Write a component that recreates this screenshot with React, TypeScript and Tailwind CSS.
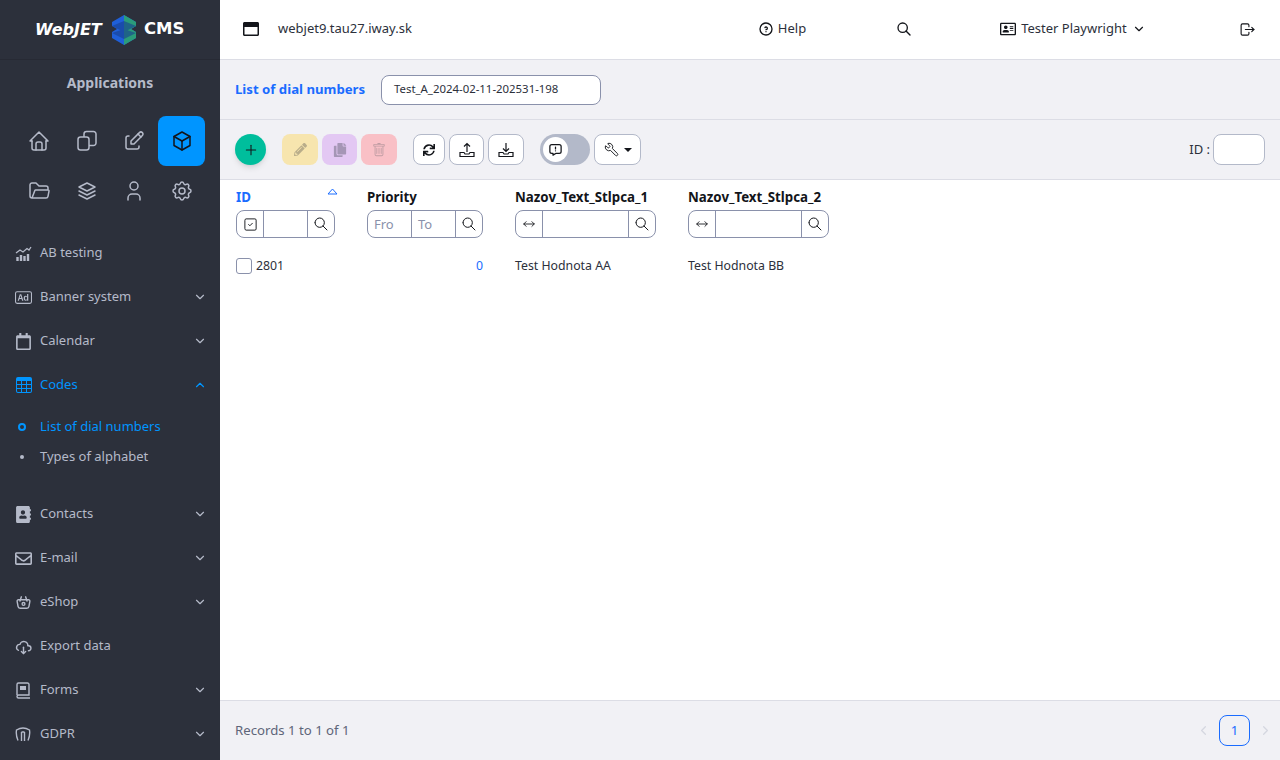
import type { ReactNode } from 'react';
import { Wrench } from 'lucide-react';
import {
  TbHome, TbEdit, TbBox, TbFolderOpen, TbStack2, TbUser, TbSettings,
  TbChevronDown, TbChevronUp, TbHelpCircle, TbSearch, TbLogout, TbPlus,
  TbMessageReport, TbArrowsHorizontal, TbSquareCheck, TbChevronLeft, TbChevronRight,
  TbBasket, TbCloudDownload,
} from 'react-icons/tb';
import {
  FaCopy, FaRegCalendar, FaAddressBook, FaRegEnvelope, FaPencilAlt, FaSync,
  FaRegWindowMaximize, FaRegAddressCard,
} from 'react-icons/fa';
import { BsTable, BsTrash, BsBadgeAd } from 'react-icons/bs';

const font = { fontFamily: '"Noto Sans", sans-serif' };

type IconProps = { size?: number; className?: string; strokeWidth?: number };

function FilesIcon({ size = 24 }: IconProps) {
  return (
    <svg width={size} height={size} viewBox="0 0 24 24" fill="none" stroke="currentColor" strokeWidth="1.5">
      <rect x="3" y="8" width="11" height="13" rx="2.500" />
      <path d="M9 8V5a2.500 2.500 0 0 1 2.500-2.500h7A2.500 2.500 0 0 1 21 5v9a2.500 2.500 0 0 1-2.500 2.500H14" />
    </svg>
  );
}

function ChartIcon({ size = 17 }: IconProps) {
  return (
    <svg width={size} height={size} viewBox="0 0 17 17" fill="none" stroke="currentColor">
      <path d="M1 8l4-3 3 2 4-3.500 2 1.500 2-3" strokeWidth="1.300" />
      <path d="M2.500 16v-4M6 16v-6M9.500 16v-5M13 16V9" strokeWidth="2.400" />
    </svg>
  );
}

function BookIcon({ size = 17 }: IconProps) {
  return (
    <svg width={size} height={size} viewBox="0 0 17 17" fill="none" stroke="currentColor" strokeWidth="1.400">
      <path d="M2 13V2.500A1.500 1.500 0 0 1 3.500 1h9A1.500 1.500 0 0 1 14 2.500V13H3.500a1.500 1.500 0 0 0 0 3H15" />
      <rect x="5" y="4" width="6" height="4" fill="currentColor" stroke="none" />
    </svg>
  );
}

function GdprIcon({ size = 17 }: IconProps) {
  return (
    <svg width={size} height={size} viewBox="0 0 17 17" fill="none" stroke="currentColor" strokeWidth="1.400">
      <path d="M3 14.500C1.500 11 1 7 1.500 4 4 2.500 6 2 8 2s4 .5 6.500 2c.5 3 0 7-1.500 10.500" />
      <path d="M6.500 15V6M9.500 15V6M6.500 6h3" />
    </svg>
  );
}

const appIcons = [TbHome, FilesIcon, TbEdit, TbBox, TbFolderOpen, TbStack2, TbUser, TbSettings];

const menuTop = [
  { label: 'AB testing', icon: ChartIcon, arrow: false },
  { label: 'Banner system', icon: BsBadgeAd, arrow: true },
  { label: 'Calendar', icon: FaRegCalendar, arrow: true },
];

const menuBottom = [
  { label: 'Contacts', icon: FaAddressBook, arrow: true },
  { label: 'E-mail', icon: FaRegEnvelope, arrow: true },
  { label: 'eShop', icon: TbBasket, arrow: true },
  { label: 'Export data', icon: TbCloudDownload, arrow: false },
  { label: 'Forms', icon: BookIcon, arrow: true },
  { label: 'GDPR', icon: GdprIcon, arrow: true },
];

function MenuItem({ label, icon: Icon, arrow }: { label: string; icon: (p: IconProps) => ReactNode; arrow: boolean }) {
  return (
    <div className="h-11 flex items-center pl-[15px] pr-[13px] text-[13px] text-[#b5bac9]">
      <span className="w-[17px] mr-[8px] flex items-center justify-center shrink-0">
        <Icon size={17} />
      </span>
      <span>{label}</span>
      {arrow && <TbChevronDown size={14} className="ml-auto" />}
    </div>
  );
}

function TrayIcon({ up }: { up: boolean }) {
  return (
    <svg width="16" height="16" viewBox="0 0 16 16" fill="none" stroke="#13151a" strokeWidth="1.2">
      <path d="M1 10.500V14.500h14v-4h-4l-1 1.500H6l-1-1.500z" />
      {up ? <path d="M8 10V1.500M5 4.500l3-3 3 3" /> : <path d="M8 1v8.500M5 6.500l3 3 3-3" />}
    </svg>
  );
}

function ToolButton({ className, children }: { className: string; children: ReactNode }) {
  return (
    <div className={`h-[31px] rounded-lg flex items-center justify-center ${className}`}>{children}</div>
  );
}

function FilterBox({ first, middle }: { first: ReactNode; middle?: ReactNode }) {
  return (
    <div className="h-[28px] mt-[3px] flex border border-[#8a91ab] rounded-lg text-[13px] text-[#13151a]">
      {first}
      {middle ?? <div className="flex-1" />}
      <div className="w-[27px] border-l border-[#8a91ab] flex items-center justify-center">
        <TbSearch size={16} strokeWidth={1.5} />
      </div>
    </div>
  );
}

export default function App() {
  const arrows = (
    <div className="w-[27px] border-r border-[#8a91ab] flex items-center justify-center">
      <TbArrowsHorizontal size={14} strokeWidth={1.5} />
    </div>
  );

  return (
    <div className="h-screen w-full flex overflow-hidden bg-white" style={font}>
      {/* Sidebar */}
      <aside className="w-[220px] shrink-0 bg-[#2c303b] overflow-hidden">
        <div className="h-[60px] border-b border-[#272a34] flex items-center pl-[35px] text-white font-['DejaVu_Sans']">
          <span className="text-[16px] font-bold italic w-[76px]">WebJET</span>
          <svg width="26" height="30" viewBox="0 0 26 30" className="shrink-0">
            <path d="M13 0 25 7v4l-5 3 5 3v6l-12 7-12-7v-6l5-3-5-3V7z" fill="#1f5fd8" />
            <path d="M13 0 25 7v4l-5 3 5 3v6l-12 7z" fill="#2b9c7a" />
            <path d="M1 11l12-5 12 5-12 6zM1 18l12-4 12 4-12 6z" fill="#17408f" opacity="0.6" />
          </svg>
          <span className="ml-[7px] text-[16.500px] font-bold">CMS</span>
        </div>
        <div className="h-[44px] flex items-center justify-center text-[14px] font-bold text-[#b5bac9]">
          Applications
        </div>
        <div className="grid grid-cols-[48px_47px_48px_47px] auto-rows-[50px] pl-[15px] mt-[12px] text-[#b5bac9]">
          {appIcons.map((Icon, i) => (
            <div
              key={i}
              className={`flex items-center justify-center rounded-lg ${
                i === 3 ? 'bg-[#0095ff] text-[#13151a]' : ''
              }`}
            >
              <Icon size={24} strokeWidth={1.5} />
            </div>
          ))}
        </div>
        <div className="mt-[15px]">
          {menuTop.map((m) => (
            <MenuItem key={m.label} {...m} />
          ))}
          <div className="h-11 flex items-center pl-[15px] pr-[13px] text-[13px] text-[#0095ff]">
            <span className="w-[17px] mr-[8px] flex items-center justify-center">
              <BsTable size={16} />
            </span>
            <span>Codes</span>
            <TbChevronUp size={14} className="ml-auto" />
          </div>
          <div className="pt-[5px] pb-[20px] text-[13px]">
            <div className="h-[30px] flex items-center text-[#0095ff]">
              <span className="w-[8px] h-[8px] rounded-full border-2 border-[#0095ff] ml-[18px] mr-[14px]" />
              List of dial numbers
            </div>
            <div className="h-[30px] flex items-center text-[#b5bac9]">
              <span className="w-[4px] h-[4px] rounded-full bg-[#b5bac9] ml-[20px] mr-[16px]" />
              Types of alphabet
            </div>
          </div>
          {menuBottom.map((m) => (
            <MenuItem key={m.label} {...m} />
          ))}
        </div>
      </aside>

      {/* Main */}
      <div className="flex-1 flex flex-col min-w-0">
        <header className="h-[60px] shrink-0 border-b border-[#dcdde5] flex items-center pb-[1px] text-[13px] text-[#2c303b]">
          <FaRegWindowMaximize size={16} className="ml-[23px] text-[#13151a]" />
          <span className="ml-[19px]">webjet9.tau27.iway.sk</span>
          <TbHelpCircle size={16} className="ml-[346px] text-[#13151a]" />
          <span className="ml-[4px]">Help</span>
          <TbSearch size={16} className="ml-[90px] text-[#13151a]" />
          <FaRegAddressCard size={16} className="ml-[88px] text-[#13151a]" />
          <span className="ml-[5px]">Tester Playwright</span>
          <TbChevronDown size={14} className="ml-[5px] text-[#13151a]" />
          <TbLogout size={17} strokeWidth={1.6} className="ml-auto mr-[24px] text-[#13151a]" />
        </header>

        <div className="h-[60px] shrink-0 bg-[#f1f1f5] border-b border-[#dcdde5] flex items-center pl-[15px]">
          <span className="text-[13.200px] font-bold text-[#1a6cff] w-[146px]">List of dial numbers</span>
          <div className="w-[220px] h-[30px] bg-white border border-[#8a91ab] rounded-lg flex items-center pl-[12px] pb-[2px] text-[11.400px] text-[#2c303b]">
            Test_A_2024-02-11-202531-198
          </div>
        </div>

        <div className="h-[60px] shrink-0 bg-[#f1f1f5] border-b border-[#dcdde5] flex items-center pl-[15px] pr-[15px]">
          <div className="w-[31px] h-[31px] rounded-full bg-[#00be9c] shadow-md flex items-center justify-center text-[#13151a]">
            <TbPlus size={16} strokeWidth={1.6} />
          </div>
          <ToolButton className="w-[36px] ml-[16px] bg-[#f7e5ae] text-[#b9ad8a]"><FaPencilAlt size={13} /></ToolButton>
          <ToolButton className="w-[35px] ml-[4px] bg-[#e3c8f3] text-[#a596b5]"><FaCopy size={14} /></ToolButton>
          <ToolButton className="w-[36px] ml-[4px] bg-[#f9c0c6] text-[#c09ca3]"><BsTrash size={14} /></ToolButton>
          <ToolButton className="w-[32px] ml-[16px] bg-white border border-[#b3b9c9] text-[#13151a]"><FaSync size={12} /></ToolButton>
          <ToolButton className="w-[35px] ml-[4px] bg-white border border-[#b3b9c9]"><TrayIcon up /></ToolButton>
          <ToolButton className="w-[36px] ml-[4px] bg-white border border-[#b3b9c9]"><TrayIcon up={false} /></ToolButton>
          <div className="w-[50px] h-[31px] ml-[16px] rounded-full bg-[#b3b9c9] p-[3px]">
            <div className="w-[25px] h-[25px] rounded-full bg-white flex items-center justify-center text-[#13151a]">
              <TbMessageReport size={15} />
            </div>
          </div>
          <ToolButton className="w-[47px] ml-[4px] bg-white border border-[#b3b9c9] text-[#13151a] gap-[5px]">
            <Wrench size={15} strokeWidth={1.5} className="-scale-x-100" />
            <span className="w-0 h-0 border-x-[4px] border-x-transparent border-t-[4px] border-t-[#13151a]" />
          </ToolButton>
          <span className="ml-auto mr-[3px] text-[13px] text-[#2c303b]">ID :</span>
          <div className="w-[52px] h-[31px] bg-white border border-[#b3b9c9] rounded-lg" />
        </div>

        {/* Table */}
        <div className="flex-1 bg-white pl-[16px] pt-[8px]">
          <div className="flex gap-[32px] text-[13.300px]">
            <div className="w-[99px]">
              <div className="h-[19px] font-bold text-[#1a6cff] relative">
                ID
                <svg width="11" height="7" viewBox="0 0 11 7" className="absolute right-[-3px] top-0" fill="none" stroke="#1a6cff">
                  <path d="M1 6h9M1 6l4.500-5L10 6" />
                </svg>
              </div>
              <FilterBox
                first={
                  <div className="w-[27px] border-r border-[#8a91ab] flex items-center justify-center">
                    <TbSquareCheck size={15} strokeWidth={1.5} />
                  </div>
                }
              />
            </div>
            <div className="w-[116px]">
              <div className="h-[19px] font-bold text-[#13151a]">Priority</div>
              <FilterBox
                first={<div className="w-[44px] border-r border-[#8a91ab] pl-[6px] leading-[26px] text-[#8a91ab] overflow-hidden">Fro</div>}
                middle={<div className="flex-1 pl-[6px] leading-[26px] text-[#8a91ab]">To</div>}
              />
            </div>
            <div className="w-[141px]">
              <div className="h-[19px] font-bold text-[#13151a] whitespace-nowrap">Nazov_Text_Stlpca_1</div>
              <FilterBox first={arrows} />
            </div>
            <div className="w-[141px]">
              <div className="h-[19px] font-bold text-[#13151a] whitespace-nowrap">Nazov_Text_Stlpca_2</div>
              <FilterBox first={arrows} />
            </div>
          </div>
          <div className="flex gap-[32px] text-[12.300px] text-[#2c303b] mt-[20px] h-[16px] items-center">
            <div className="w-[99px] flex items-center">
              <span className="w-[16px] h-[16px] border border-[#8a91ab] rounded-[3px] mr-[4px]" />
              2801
            </div>
            <div className="w-[116px] text-right text-[#1a6cff]">0</div>
            <div className="w-[141px]">Test Hodnota AA</div>
            <div className="w-[141px]">Test Hodnota BB</div>
          </div>
        </div>

        <footer className="h-[60px] shrink-0 bg-[#f1f1f5] border-t border-[#dcdde5] flex items-center pl-[15px] pr-[7px] text-[13.200px] text-[#5e6579]">
          <span>Records 1 to 1 of 1</span>
          <TbChevronLeft size={15} className="ml-auto text-[#d5d7e0]" />
          <div className="w-[31px] h-[31px] mx-[8px] border border-[#1a6cff] rounded-lg flex items-center justify-center text-[#1a6cff]">1</div>
          <TbChevronRight size={15} className="text-[#d5d7e0]" />
        </footer>
      </div>
    </div>
  );
}
